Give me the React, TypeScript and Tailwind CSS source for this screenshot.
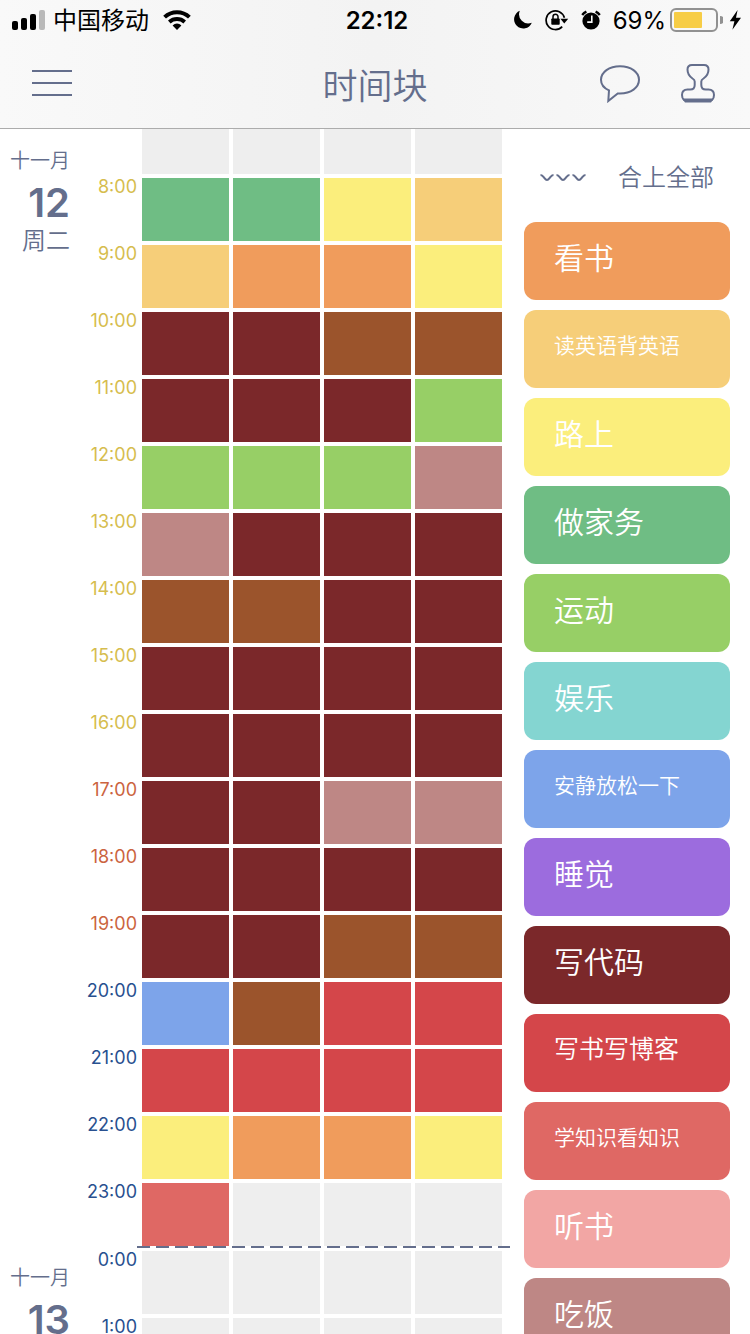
import React from 'react';

const EMPTY = 'bg-[#eeeeee]';
const GREEN = 'bg-[#6fbd84]';
const YELLOW = 'bg-[#fbee7c]';
const SAND = 'bg-[#f6ce79]';
const ORANGE = 'bg-[#f09c5c]';
const MAROON = 'bg-[#7b282a]';
const BROWN = 'bg-[#9b542c]';
const LIME = 'bg-[#97cf66]';
const ROSE = 'bg-[#be8785]';
const BLUE = 'bg-[#7da4ea]';
const RED = 'bg-[#d4464a]';
const CORAL = 'bg-[#df6864]';
const TEAL = 'bg-[#84d5d1]';
const PURPLE = 'bg-[#9c6cde]';
const PINK = 'bg-[#f2a6a4]';

const DAY = 'text-[#d6bd4e]';
const DUSK = 'text-[#cb6440]';
const NIGHT = 'text-[#28508f]';

type Hour = { time: string; tone: string; cells: string[] };

const today: Hour[] = [
  { time: '8:00', tone: DAY, cells: [GREEN, GREEN, YELLOW, SAND] },
  { time: '9:00', tone: DAY, cells: [SAND, ORANGE, ORANGE, YELLOW] },
  { time: '10:00', tone: DAY, cells: [MAROON, MAROON, BROWN, BROWN] },
  { time: '11:00', tone: DAY, cells: [MAROON, MAROON, MAROON, LIME] },
  { time: '12:00', tone: DAY, cells: [LIME, LIME, LIME, ROSE] },
  { time: '13:00', tone: DAY, cells: [ROSE, MAROON, MAROON, MAROON] },
  { time: '14:00', tone: DAY, cells: [BROWN, BROWN, MAROON, MAROON] },
  { time: '15:00', tone: DAY, cells: [MAROON, MAROON, MAROON, MAROON] },
  { time: '16:00', tone: DAY, cells: [MAROON, MAROON, MAROON, MAROON] },
  { time: '17:00', tone: DUSK, cells: [MAROON, MAROON, ROSE, ROSE] },
  { time: '18:00', tone: DUSK, cells: [MAROON, MAROON, MAROON, MAROON] },
  { time: '19:00', tone: DUSK, cells: [MAROON, MAROON, BROWN, BROWN] },
  { time: '20:00', tone: NIGHT, cells: [BLUE, BROWN, RED, RED] },
  { time: '21:00', tone: NIGHT, cells: [RED, RED, RED, RED] },
  { time: '22:00', tone: NIGHT, cells: [YELLOW, ORANGE, ORANGE, YELLOW] },
  { time: '23:00', tone: NIGHT, cells: [CORAL, EMPTY, EMPTY, EMPTY] },
];

const tomorrow: Hour[] = [
  { time: '0:00', tone: NIGHT, cells: [EMPTY, EMPTY, EMPTY, EMPTY] },
  { time: '1:00', tone: NIGHT, cells: [EMPTY, EMPTY, EMPTY, EMPTY] },
];

const categories = [
  { name: '看书', color: ORANGE, size: 'text-[30px]' },
  { name: '读英语背英语', color: SAND, size: 'text-[21px]' },
  { name: '路上', color: YELLOW, size: 'text-[30px]' },
  { name: '做家务', color: GREEN, size: 'text-[30px]' },
  { name: '运动', color: LIME, size: 'text-[30px]' },
  { name: '娱乐', color: TEAL, size: 'text-[30px]' },
  { name: '安静放松一下', color: BLUE, size: 'text-[21px]' },
  { name: '睡觉', color: PURPLE, size: 'text-[30px]' },
  { name: '写代码', color: MAROON, size: 'text-[30px]' },
  { name: '写书写博客', color: RED, size: 'text-[25px]' },
  { name: '学知识看知识', color: CORAL, size: 'text-[21px]' },
  { name: '听书', color: PINK, size: 'text-[30px]' },
  { name: '吃饭', color: ROSE, size: 'text-[30px]' },
];

function StatusBar() {
  return (
    <div className="grid h-10 grid-cols-[1fr_auto_1fr] items-center pr-2 pl-3 text-black">
      <div className="flex items-center">
        <svg width="33" height="20" viewBox="0 0 33 20" aria-hidden="true">
          <rect x="0" y="11" width="6" height="9" rx="2" />
          <rect x="9" y="8" width="6" height="12" rx="2" />
          <rect x="18" y="4" width="6" height="16" rx="2" />
          <rect x="27" y="0" width="6" height="20" rx="2" fill="#b9b9b9" />
        </svg>
        <span className="ml-2 pt-0.5 text-2xl leading-8">中国移动</span>
        <svg className="ml-3.5" width="28" height="20" viewBox="0 0 28 20" aria-hidden="true">
          <path d="M1.6 7.1a18 18 0 0 1 24.8 0" fill="none" stroke="#000" strokeWidth="4" />
          <path d="M6.3 12a11.4 11.4 0 0 1 15.4 0" fill="none" stroke="#000" strokeWidth="3.8" />
          <path d="M14 20l-4.4-4.6a6.3 6.3 0 0 1 8.8 0z" />
        </svg>
      </div>
      <time className="pt-0.5 text-2xl leading-8 font-semibold">22:12</time>
      <div className="flex items-center justify-end">
        <svg width="20" height="20" viewBox="0 0 20 20" aria-hidden="true">
          <path d="M6.8 .8A9.2 9.2 0 1 0 18.8 12.8 9.2 9.2 0 0 1 6.8 .8z" />
        </svg>
        <svg className="ml-3" width="24" height="22" viewBox="0 0 24 22" aria-hidden="true">
          <path d="M17.2 17.6A9.3 9.3 0 1 1 19.4 8.8" fill="none" stroke="#000" strokeWidth="1.7" />
          <path d="M15.4 9.8h7.8l-3.9 4.6z" />
          <rect x="6.3" y="9.5" width="8.4" height="6.3" rx="0.8" />
          <path d="M8 10V7.8a2.5 2.5 0 0 1 5 0V10" fill="none" stroke="#000" strokeWidth="1.5" />
        </svg>
        <svg className="ml-3" width="20" height="20" viewBox="0 0 20 20" aria-hidden="true">
          <circle cx="10" cy="11" r="8.6" />
          <path d="M1.2 5A11.5 11.5 0 0 1 5.4 1.6M18.8 5A11.5 11.5 0 0 0 14.6 1.6" fill="none" stroke="#000" strokeWidth="2.4" />
          <path d="M10.8 5.5v6.6H6.2" fill="none" stroke="#f7f7f7" strokeWidth="1.6" />
        </svg>
        <span className="ml-3 pt-0.5 text-2xl leading-8">69%</span>
        <svg className="ml-1" width="53" height="24" viewBox="0 0 53 24" aria-hidden="true">
          <rect x="1" y="1" width="46" height="22" rx="5" fill="none" stroke="#919191" strokeWidth="2" />
          <rect x="4" y="4" width="28" height="16" rx="1" fill="#f7cd46" />
          <path d="M50 8a4 4 0 0 1 0 8z" fill="#919191" />
        </svg>
        <svg className="ml-1.5" width="13" height="20" viewBox="0 0 13 20" aria-hidden="true">
          <path d="M8.6 0L.8 11.2h4.6L3.4 19.8 12 7.8H7z" />
        </svg>
      </div>
    </div>
  );
}

function NavBar() {
  return (
    <nav className="grid h-[88px] grid-cols-[1fr_auto_1fr] items-center px-8 pb-0.5 text-[#646e8c]">
      <button type="button" aria-label="菜单" className="w-10">
        <svg width="40" height="28" viewBox="0 0 40 28" aria-hidden="true">
          <path d="M0 2h40M0 14h40M0 26h40" stroke="currentColor" strokeWidth="2" />
        </svg>
      </button>
      <h1 className="pt-1.5 text-[35px] leading-[44px] font-[350]">时间块</h1>
      <div className="flex items-center justify-end gap-10 pr-0.5">
        <button type="button" aria-label="消息">
          <svg width="42" height="40" viewBox="0 0 42 40" fill="none" stroke="currentColor" strokeWidth="2" aria-hidden="true">
            <path d="M11 27.4C5.5 25 3 20.8 3 16.8 3 9 11.2 3.2 22 3.2S41 9 41 16.8 32.8 30.5 22 30.5h-2.300L10.300 38z" />
          </svg>
        </button>
        <button type="button" aria-label="图章">
          <svg width="36" height="40" viewBox="0 0 36 40" fill="none" stroke="currentColor" strokeWidth="2" aria-hidden="true">
            <path d="M12 2h12c3 0 4.500 1.500 4.500 4.500 0 4.500-2 7-5 9-1.700 1-2.200 1.500-2.200 3V22c0 3 1.500 4.500 4.500 4.500h2.700c3.500 0 5.500 2 5.500 5.500 0 2-.6 4-2 5H4c-1.400-1-2-3-2-5 0-3.500 2-5.500 5.500-5.500h2.700c3 0 4.500-1.500 4.500-4.500v-3.500c0-1.500-.5-2-2.200-3-3-2-5-4.500-5-9C7.500 3.500 9 2 12 2z" />
            <path d="M2 35.500h32l-3 4.100H5z" fill="currentColor" stroke="none" />
          </svg>
        </button>
      </div>
    </nav>
  );
}

function Cells({ colors, height }: { colors: string[]; height: string }) {
  return (
    <div className="grid flex-1 grid-cols-4 gap-1">
      {colors.map((color, i) => (
        <div key={i} className={`${height} ${color}`} />
      ))}
    </div>
  );
}

function HourRow({ hour }: { hour: Hour }) {
  return (
    <div className="flex items-start gap-[5px] pr-2">
      <div className={`w-[67px] text-right text-lg leading-[18px] ${hour.tone}`}>{hour.time}</div>
      <Cells colors={hour.cells} height="h-[63px]" />
    </div>
  );
}

function DayLabel({ month, day, week }: { month: string; day: string; week: string }) {
  return (
    <header className="w-[70px] shrink-0 pt-5 text-right text-[#646e8c]">
      <div className="text-[20px] leading-6 font-[350]">{month}</div>
      <div className="mt-2.5 text-[40px] leading-10 font-semibold">{day}</div>
      <div className="mt-1 text-2xl leading-7 font-[350]">{week}</div>
    </header>
  );
}

export default function App() {
  return (
    <div className="flex h-screen flex-col overflow-hidden bg-white font-['Inter','Noto_Sans_CJK_SC',sans-serif]">
      <header className="shrink-0 border-b border-[#acacac] bg-linear-to-r from-[#f9f9f9] via-[#f3f3f3] to-[#f9f9f9]">
        <StatusBar />
        <NavBar />
      </header>

      <div className="flex min-h-0 flex-1 overflow-hidden">
        <main className="min-w-0 flex-1">
          <section className="flex">
            <DayLabel month="十一月" day="12" week="周二" />
            <div className="flex flex-1 flex-col gap-1">
              <div className="flex pr-2 pl-[72px]">
                <Cells colors={[EMPTY, EMPTY, EMPTY, EMPTY]} height="h-[45px]" />
              </div>
              {today.map((hour) => (
                <HourRow key={hour.time} hour={hour} />
              ))}
            </div>
          </section>
          <section className="flex">
            <DayLabel month="十一月" day="13" week="周三" />
            <div className="flex-1">
              <div className="mb-[3px] ml-[67px] h-0.5 bg-[repeating-linear-gradient(90deg,#646e8c_0_13px,transparent_13px_19px)]" />
              <div className="flex flex-col gap-1">
                {tomorrow.map((hour) => (
                  <HourRow key={hour.time} hour={hour} />
                ))}
              </div>
            </div>
          </section>
        </main>

        <aside className="w-60 shrink-0 pr-5 pl-3.5">
          <button type="button" className="flex h-[93px] w-full items-center justify-between pt-1 pr-4 pl-4 text-[#646e8c]">
            <svg width="46" height="10" viewBox="0 0 46 10" fill="none" stroke="currentColor" strokeWidth="2" aria-hidden="true">
              <path d="M.5 2C2.5 2 3.2 3.5 4.5 5.2c1.8 2.4 3.2 2.4 5 0C10.800 3.5 11.500 2 13.500 2" />
              <path d="M16.500 2c2 0 2.700 1.500 4 3.200 1.800 2.400 3.200 2.400 5 0C26.800 3.500 27.500 2 29.500 2" />
              <path d="M32.500 2c2 0 2.700 1.500 4 3.200 1.800 2.400 3.200 2.400 5 0C42.800 3.500 43.500 2 45.500 2" />
            </svg>
            <span className="text-2xl font-[350]">合上全部</span>
          </button>
          <div className="flex flex-col gap-2.5">
            {categories.map((category) => (
              <button
                key={category.name}
                type="button"
                className={`flex h-[78px] shrink-0 items-center rounded-xl pb-1.5 pl-[30px] font-[350] text-white ${category.color} ${category.size}`}
              >
                {category.name}
              </button>
            ))}
          </div>
        </aside>
      </div>
    </div>
  );
}
